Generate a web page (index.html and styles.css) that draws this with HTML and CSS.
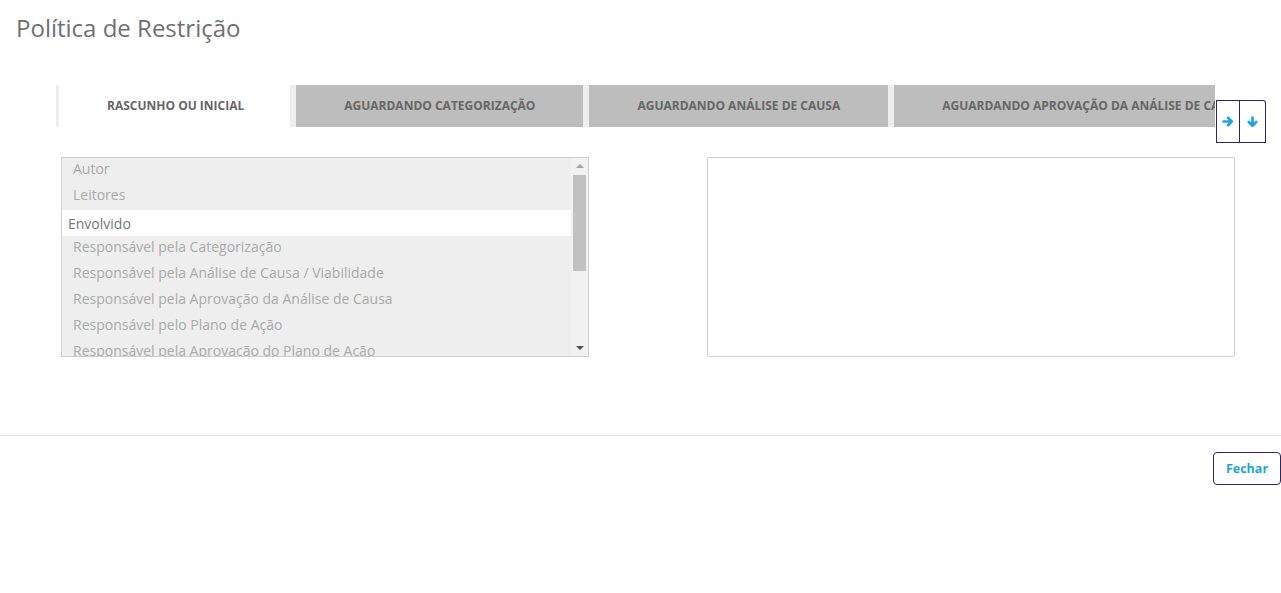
FILE: index.html
```html
<!DOCTYPE html>
<html lang="pt">
<head>
<meta charset="utf-8">
<title>Política de Restrição</title>
<link rel="stylesheet" href="styles.css">
</head>
<body>
<h1 class="title">Política de Restrição</h1>

<div class="tabs-row">
  <div class="tabs">
    <div class="tab active">RASCUNHO OU INICIAL</div>
    <div class="tab">AGUARDANDO CATEGORIZAÇÃO</div>
    <div class="tab">AGUARDANDO ANÁLISE DE CAUSA</div>
    <div class="tab">AGUARDANDO APROVAÇÃO DA ANÁLISE DE CAUSA</div>
  </div>
  <div class="tab-nav">
    <button class="nav-btn nav-right" aria-label="Próximo">
      <svg width="12" height="11" viewBox="0 0 12 11"><path d="M1.5 5.5H9M6 1.8l3.8 3.7L6 9.2" fill="none" stroke="#1da6d8" stroke-width="2.6" stroke-linecap="round" stroke-linejoin="round"/></svg>
    </button>
    <button class="nav-btn nav-down" aria-label="Expandir">
      <svg width="11" height="12" viewBox="0 0 11 12"><path d="M5.5 1.5V9M1.8 6l3.7 3.8L9.2 6" fill="none" stroke="#1da6d8" stroke-width="2.6" stroke-linecap="round" stroke-linejoin="round"/></svg>
    </button>
  </div>
</div>

<div class="lists">
  <div class="listbox">
    <div class="items">
      <div class="item">Autor</div>
      <div class="item">Leitores</div>
      <div class="item selected">Envolvido</div>
      <div class="item">Responsável pela Categorização</div>
      <div class="item">Responsável pela Análise de Causa / Viabilidade</div>
      <div class="item">Responsável pela Aprovação da Análise de Causa</div>
      <div class="item">Responsável pelo Plano de Ação</div>
      <div class="item">Responsável pela Aprovação do Plano de Ação</div>
    </div>
    <div class="scrollbar">
      <span class="arrow-up"></span>
      <div class="track"><div class="thumb"></div></div>
      <span class="arrow-down"></span>
    </div>
  </div>
  <div class="target-box"></div>
</div>

<div class="footer">
  <button class="btn-close">Fechar</button>
</div>
</body>
</html>
```

FILE: styles.css
```css
* { box-sizing: border-box; }

body {
  margin: 0;
  background: #fff;
  font-family: "Open Sans", "Noto Sans", "Liberation Sans", sans-serif;
  color: #666;
}

.title {
  margin: 0;
  padding: 12px 16px 0;
  height: 85px;
  font-size: 24px;
  line-height: 32px;
  font-weight: 400;
  color: #707070;
}

.tabs-row {
  display: flex;
  align-items: flex-start;
  padding-left: 56px;
}

.tabs {
  width: 1159px;
  height: 42px;
  overflow: hidden;
  display: flex;
  gap: 6px;
  padding-left: 3px;
  background: #eeeeee;
}

.tab {
  flex: none;
  height: 42px;
  line-height: 42px;
  padding: 0 48px;
  background: #bdbdbd;
  font-size: 12px;
  font-weight: 700;
  color: #666;
  white-space: nowrap;
}

.tab.active {
  background: #fff;
  padding-right: 46px;
}

.tab-nav {
  display: flex;
  margin-top: 15px;
  margin-left: 1px;
}

.nav-btn {
  height: 43px;
  background: #fff;
  border: 1px solid #2f2270;
  padding: 0;
  display: flex;
  align-items: center;
  justify-content: center;
}

.nav-right { width: 24px; }
.nav-down { width: 26px; border-left: none; border-top-right-radius: 3px; }

.lists {
  display: flex;
  gap: 118px;
  padding: 14px 0 0 61px;
  height: 292px;
}

.listbox {
  width: 528px;
  height: 200px;
  border: 1px solid #cfcfcf;
  background: #eeeeee;
  display: flex;
  overflow: hidden;
}

.items {
  flex: 1;
  overflow: hidden;
}

.item {
  height: 26px;
  line-height: 22px;
  padding-left: 11px;
  font-size: 14px;
  color: #aaaaaa;
  white-space: nowrap;
}

.item.selected {
  background: #fff;
  color: #777;
  padding-left: 6px;
  line-height: 28px;
}

.scrollbar {
  width: 17px;
  background: #f1f1f1;
  display: flex;
  flex-direction: column;
  align-items: center;
}

.arrow-up, .arrow-down {
  width: 0;
  height: 0;
  border-left: 4px solid transparent;
  border-right: 4px solid transparent;
  flex: none;
}

.arrow-up {
  border-bottom: 4px solid #a3a3a3;
  margin-top: 6px;
}

.arrow-down {
  border-top: 4px solid #505050;
  margin-bottom: 6px;
}

.track {
  flex: 1;
  width: 100%;
  padding: 7px 2px 0 2px;
}

.thumb {
  height: 96px;
  background: #c1c1c1;
}

.target-box {
  width: 528px;
  height: 200px;
  border: 1px solid #cfcfcf;
  border-radius: 2px;
  background: #fff;
}

.footer {
  border-top: 1px solid #e5e5e5;
  display: flex;
  justify-content: flex-end;
  padding-top: 16px;
}

.btn-close {
  width: 68px;
  height: 33px;
  border: 1px solid #2f2270;
  border-radius: 4px;
  background: #fff;
  color: #1da6d8;
  font-family: "Open Sans", "Noto Sans", sans-serif;
  font-size: 12.5px;
  font-weight: 700;
  padding: 0;
}
```
